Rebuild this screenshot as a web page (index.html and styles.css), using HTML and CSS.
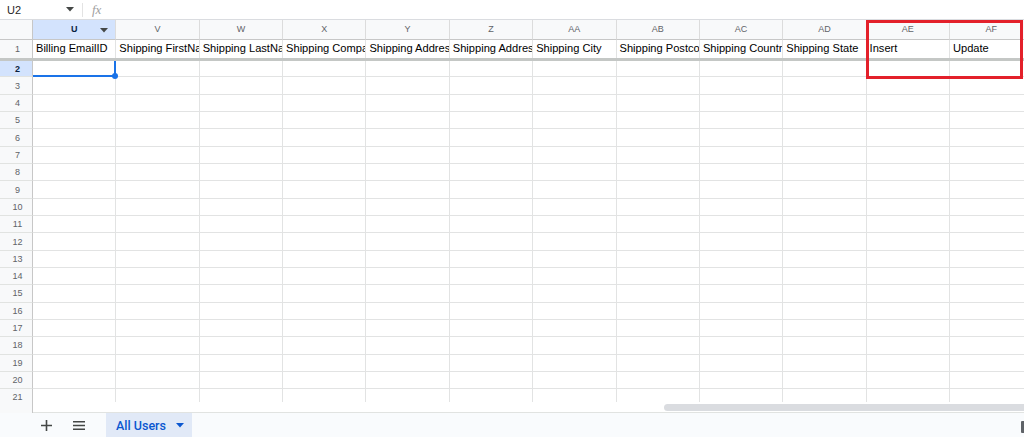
FILE: index.html
```html
<!DOCTYPE html>
<html>
<head>
<meta charset="utf-8">
<link rel="stylesheet" href="styles.css">
</head>
<body>
<div class="app">
  <div class="topbar">
    <div class="namebox">U2</div>
    <svg class="nb-caret" width="8" height="5" viewBox="0 0 8 5"><path d="M0 0h8L4 4.5z" fill="#444746"/></svg>
    <div class="sep"></div>
    <div class="fx">fx</div>
  </div>
  <div class="grid">
    <div class="row hdr">
      <div class="rh corner"></div>
      <div class="c ch sel">U<svg class="ch-caret" width="8" height="5" viewBox="0 0 8 5"><path d="M0 0h8L4 4.5z" fill="#444746"/></svg></div>
      <div class="c ch">V</div><div class="c ch">W</div><div class="c ch">X</div><div class="c ch">Y</div><div class="c ch">Z</div><div class="c ch">AA</div><div class="c ch">AB</div><div class="c ch">AC</div><div class="c ch">AD</div><div class="c ch">AE</div><div class="c ch">AF</div>
    </div>
    <div class="row r1">
      <div class="rh">1</div>
      <div class="c">Billing EmailID</div><div class="c">Shipping FirstName</div><div class="c">Shipping LastName</div><div class="c">Shipping Company</div><div class="c">Shipping Address 1</div><div class="c">Shipping Address 2</div><div class="c">Shipping City</div><div class="c">Shipping Postcode</div><div class="c">Shipping Country</div><div class="c">Shipping State</div><div class="c">Insert</div><div class="c">Update</div>
    </div>
    <div class="freeze"></div>
    <div class="body">
      <div class="row r2"><div class="rh sel">2</div><div class="c active"><span class="handle"></span></div><div class="c"></div><div class="c"></div><div class="c"></div><div class="c"></div><div class="c"></div><div class="c"></div><div class="c"></div><div class="c"></div><div class="c"></div><div class="c"></div><div class="c"></div></div>
      <div class="row"><div class="rh">3</div><div class="c"></div><div class="c"></div><div class="c"></div><div class="c"></div><div class="c"></div><div class="c"></div><div class="c"></div><div class="c"></div><div class="c"></div><div class="c"></div><div class="c"></div><div class="c"></div></div>
      <div class="row"><div class="rh">4</div><div class="c"></div><div class="c"></div><div class="c"></div><div class="c"></div><div class="c"></div><div class="c"></div><div class="c"></div><div class="c"></div><div class="c"></div><div class="c"></div><div class="c"></div><div class="c"></div></div>
      <div class="row"><div class="rh">5</div><div class="c"></div><div class="c"></div><div class="c"></div><div class="c"></div><div class="c"></div><div class="c"></div><div class="c"></div><div class="c"></div><div class="c"></div><div class="c"></div><div class="c"></div><div class="c"></div></div>
      <div class="row"><div class="rh">6</div><div class="c"></div><div class="c"></div><div class="c"></div><div class="c"></div><div class="c"></div><div class="c"></div><div class="c"></div><div class="c"></div><div class="c"></div><div class="c"></div><div class="c"></div><div class="c"></div></div>
      <div class="row"><div class="rh">7</div><div class="c"></div><div class="c"></div><div class="c"></div><div class="c"></div><div class="c"></div><div class="c"></div><div class="c"></div><div class="c"></div><div class="c"></div><div class="c"></div><div class="c"></div><div class="c"></div></div>
      <div class="row"><div class="rh">8</div><div class="c"></div><div class="c"></div><div class="c"></div><div class="c"></div><div class="c"></div><div class="c"></div><div class="c"></div><div class="c"></div><div class="c"></div><div class="c"></div><div class="c"></div><div class="c"></div></div>
      <div class="row"><div class="rh">9</div><div class="c"></div><div class="c"></div><div class="c"></div><div class="c"></div><div class="c"></div><div class="c"></div><div class="c"></div><div class="c"></div><div class="c"></div><div class="c"></div><div class="c"></div><div class="c"></div></div>
      <div class="row"><div class="rh">10</div><div class="c"></div><div class="c"></div><div class="c"></div><div class="c"></div><div class="c"></div><div class="c"></div><div class="c"></div><div class="c"></div><div class="c"></div><div class="c"></div><div class="c"></div><div class="c"></div></div>
      <div class="row"><div class="rh">11</div><div class="c"></div><div class="c"></div><div class="c"></div><div class="c"></div><div class="c"></div><div class="c"></div><div class="c"></div><div class="c"></div><div class="c"></div><div class="c"></div><div class="c"></div><div class="c"></div></div>
      <div class="row"><div class="rh">12</div><div class="c"></div><div class="c"></div><div class="c"></div><div class="c"></div><div class="c"></div><div class="c"></div><div class="c"></div><div class="c"></div><div class="c"></div><div class="c"></div><div class="c"></div><div class="c"></div></div>
      <div class="row"><div class="rh">13</div><div class="c"></div><div class="c"></div><div class="c"></div><div class="c"></div><div class="c"></div><div class="c"></div><div class="c"></div><div class="c"></div><div class="c"></div><div class="c"></div><div class="c"></div><div class="c"></div></div>
      <div class="row"><div class="rh">14</div><div class="c"></div><div class="c"></div><div class="c"></div><div class="c"></div><div class="c"></div><div class="c"></div><div class="c"></div><div class="c"></div><div class="c"></div><div class="c"></div><div class="c"></div><div class="c"></div></div>
      <div class="row"><div class="rh">15</div><div class="c"></div><div class="c"></div><div class="c"></div><div class="c"></div><div class="c"></div><div class="c"></div><div class="c"></div><div class="c"></div><div class="c"></div><div class="c"></div><div class="c"></div><div class="c"></div></div>
      <div class="row"><div class="rh">16</div><div class="c"></div><div class="c"></div><div class="c"></div><div class="c"></div><div class="c"></div><div class="c"></div><div class="c"></div><div class="c"></div><div class="c"></div><div class="c"></div><div class="c"></div><div class="c"></div></div>
      <div class="row"><div class="rh">17</div><div class="c"></div><div class="c"></div><div class="c"></div><div class="c"></div><div class="c"></div><div class="c"></div><div class="c"></div><div class="c"></div><div class="c"></div><div class="c"></div><div class="c"></div><div class="c"></div></div>
      <div class="row"><div class="rh">18</div><div class="c"></div><div class="c"></div><div class="c"></div><div class="c"></div><div class="c"></div><div class="c"></div><div class="c"></div><div class="c"></div><div class="c"></div><div class="c"></div><div class="c"></div><div class="c"></div></div>
      <div class="row"><div class="rh">19</div><div class="c"></div><div class="c"></div><div class="c"></div><div class="c"></div><div class="c"></div><div class="c"></div><div class="c"></div><div class="c"></div><div class="c"></div><div class="c"></div><div class="c"></div><div class="c"></div></div>
      <div class="row"><div class="rh">20</div><div class="c"></div><div class="c"></div><div class="c"></div><div class="c"></div><div class="c"></div><div class="c"></div><div class="c"></div><div class="c"></div><div class="c"></div><div class="c"></div><div class="c"></div><div class="c"></div></div>
      <div class="row"><div class="rh">21</div><div class="c"></div><div class="c"></div><div class="c"></div><div class="c"></div><div class="c"></div><div class="c"></div><div class="c"></div><div class="c"></div><div class="c"></div><div class="c"></div><div class="c"></div><div class="c"></div></div>
    </div>
    <div class="scrollrow">
      <div class="rh blank"></div>
      <div class="track"><div class="thumb"></div></div>
    </div>
    <div class="highlight"></div>
  </div>
  <div class="tabbar">
    <div class="tb-btn plus">
      <svg width="11" height="11" viewBox="0 0 11 11"><path d="M5.5 0v11M0 5.5h11" stroke="#444746" stroke-width="1.6"/></svg>
    </div>
    <div class="tb-btn menu">
      <svg width="12" height="9" viewBox="0 0 12 9"><path d="M0 .75h12M0 4.5h12M0 8.25h12" stroke="#444746" stroke-width="1.4"/></svg>
    </div>
    <div class="tab">All Users<svg class="tab-caret" width="8" height="5" viewBox="0 0 8 5"><path d="M0 0h8L4 4.5z" fill="#0b57d0"/></svg></div>
    <div class="spacer"></div>
    <div class="edge"></div>
  </div>
</div>
</body>
</html>
```
FILE: styles.css
```css
* { box-sizing: border-box; }
html, body { margin: 0; padding: 0; }
body {
  width: 1024px;
  height: 437px;
  overflow: hidden;
  background: #ffffff;
  font-family: "Liberation Sans", Arial, sans-serif;
}
.app {
  display: flex;
  flex-direction: column;
  width: 1024px;
  height: 437px;
}
.topbar {
  height: 20px;
  flex: none;
  display: flex;
  align-items: center;
  border-bottom: 1px solid #dadce0;
  background: #fff;
}
.namebox {
  width: 64px;
  padding-left: 7px;
  font-size: 11px;
  color: #1f1f1f;
  line-height: 18px;
}
.nb-caret { margin-left: 2px; }
.sep {
  width: 1px;
  height: 14px;
  background: #e3e3e3;
  margin-left: 8px;
}
.fx {
  margin-left: 9px;
  font-family: "Liberation Serif", serif;
  font-style: italic;
  font-size: 13px;
  color: #a0a0a0;
  line-height: 18px;
}
.grid {
  position: relative;
  flex: none;
  height: 393px;
  overflow: hidden;
}
.row {
  display: flex;
  height: 17.33px;
}
.rh {
  flex: none;
  width: 33px;
  background: #f8f9fa;
  border-right: 1px solid #c7c7c7;
  border-bottom: 1px solid #e1e3e1;
  font-size: 9px;
  color: #5f6368;
  display: flex;
  align-items: center;
  justify-content: center;
  padding-left: 3px;
}
.c {
  flex: none;
  width: 83.36px;
  border-right: 1px solid #e2e3e3;
  border-bottom: 1px solid #e2e3e3;
  overflow: hidden;
  white-space: nowrap;
  position: relative;
}
.hdr { height: 20px; }
.hdr .rh, .hdr .c { border-bottom: 1px solid #c7c7c7; background: #f8f9fa; }
.hdr .rh { border-right: 1px solid #c7c7c7; }
.ch {
  font-size: 9px;
  color: #5f6368;
  text-align: center;
  line-height: 19px;
  border-right-color: #dcdcdc;
}
.ch.sel {
  background: #d3e3fd !important;
  color: #0b1f3f;
  font-weight: bold;
}
.ch-caret {
  position: absolute;
  right: 7px;
  top: 8px;
}
.r1 { height: 18px; }
.r1 .c {
  font-size: 11.1px;
  color: #000;
  line-height: 17px;
  padding-left: 3px;
  text-overflow: clip;
  border-bottom: none;
}
.r1 .rh { border-bottom: none; }
.freeze {
  height: 3px;
  background: #c4c7c5;
  flex: none;
}
.body {
  height: 341px;
  overflow: hidden;
}
.r2 { height: 16.4px; }
.rh.sel {
  background: #d3e3fd;
  color: #0b1f3f;
  font-weight: bold;
}
.c.active {
  overflow: visible;
  border-bottom: 2px solid #1a73e8;
  border-right: 2px solid #1a73e8;
  z-index: 2;
}
.handle {
  position: absolute;
  right: -4px;
  bottom: -4px;
  width: 6px;
  height: 6px;
  border-radius: 50%;
  background: #1a73e8;
}
.scrollrow {
  display: flex;
  height: 11px;
  border-bottom: 1px solid #e1e3e1;
}
.rh.blank { height: 11px; border-bottom: none; }
.track {
  flex: 1;
  background: #fff;
  position: relative;
  display: flex;
  align-items: center;
  justify-content: flex-end;
}
.thumb {
  width: 360px;
  height: 7px;
  border-radius: 4px 0 0 4px;
  background: #dadce0;
}
.highlight {
  position: absolute;
  left: 866px;
  top: 0;
  width: 157px;
  height: 59px;
  border: 3px solid #e3202a;
  pointer-events: none;
}
.tabbar {
  flex: 1;
  display: flex;
  align-items: stretch;
  background: #f9fbfd;
}
.tb-btn {
  display: flex;
  align-items: center;
  justify-content: center;
  width: 22px;
}
.plus { margin-left: 35px; }
.menu { margin-left: 11px; }
.tab {
  margin-left: 16px;
  width: 86px;
  background: #e1e9f7;
  color: #0b57d0;
  font-family: "Roboto", "Liberation Sans", sans-serif;
  font-weight: 500;
  font-size: 12.5px;
  display: flex;
  align-items: center;
  padding-left: 10px;
}
.tab-caret { margin-left: 10px; }
.spacer { flex: 1; }
.edge {
  width: 3px;
  height: 12px;
  margin-top: 8px;
  background: #5f6368;
  border-radius: 1px 0 0 1px;
}
```
